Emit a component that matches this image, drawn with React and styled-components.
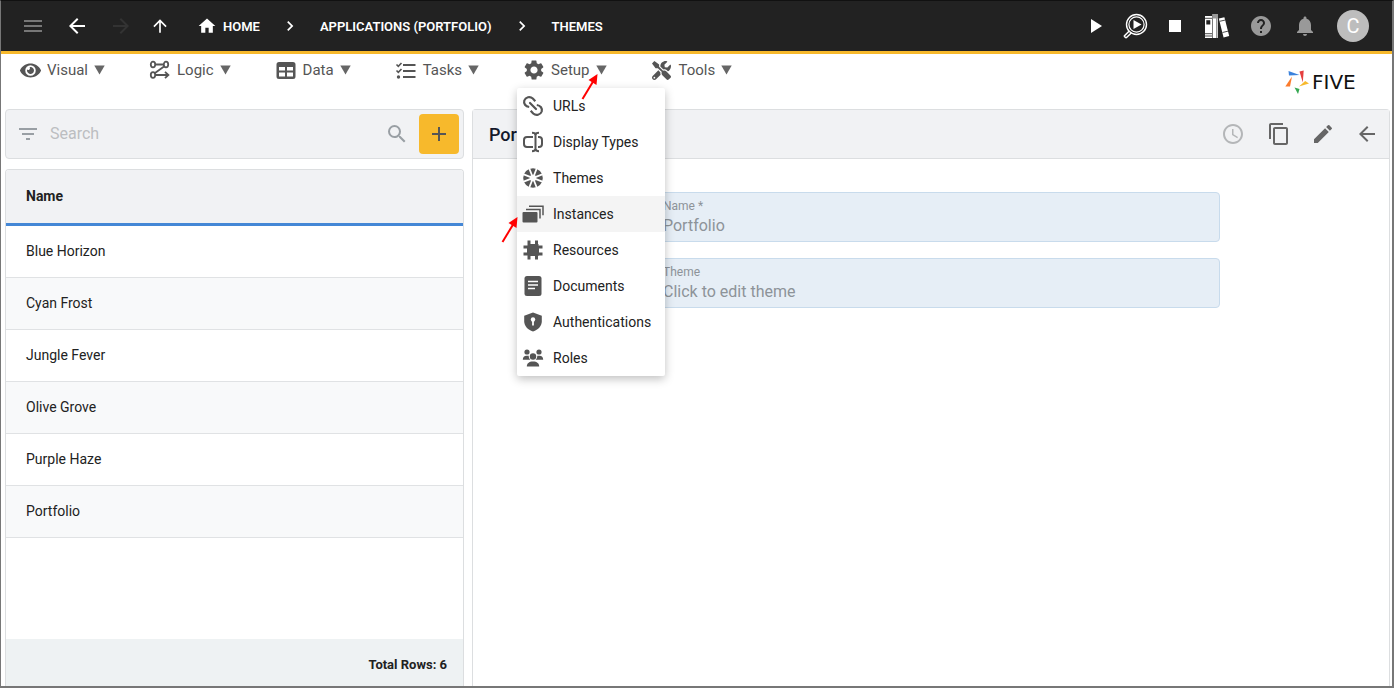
import React from 'react'
import styled, { createGlobalStyle } from 'styled-components'
import {
  MdMenu,
  MdArrowBack,
  MdArrowForward,
  MdArrowUpward,
  MdHome,
  MdChevronRight,
  MdPlayArrow,
  MdStop,
  MdHelp,
  MdNotifications,
  MdFilterList,
  MdSearch,
  MdAdd,
  MdAccessTime,
  MdContentCopy,
  MdEdit,
  MdSettings
} from 'react-icons/md'
import { FaEye, FaTools } from 'react-icons/fa'

const themes = ['Blue Horizon', 'Cyan Frost', 'Jungle Fever', 'Olive Grove', 'Purple Haze', 'Portfolio']

/* ---------- icons ---------- */

const LogicIcon = () => (
  <svg width="22" height="22" viewBox="0 0 22 22" fill="none" stroke="currentColor" strokeWidth="1.800">
    <ellipse cx="4" cy="5.5" rx="2.2" ry="2.800" />
    <ellipse cx="17" cy="5.5" rx="2.2" ry="2.800" />
    <ellipse cx="4" cy="16" rx="2.2" ry="2.800" />
    <path d="M6.5 5.5h8M15 7.5L6 14M6.5 16H19M16 12.8l3.4 3.2-3.4 3.2" />
  </svg>
)

const DataIcon = () => (
  <svg width="22" height="22" viewBox="0 0 22 22" fill="currentColor" fillRule="evenodd">
    <path d="M4 3h14a2.500 2.500 0 0 1 2.500 2.500v12a2.500 2.500 0 0 1-2.500 2.500H4A2.500 2.500 0 0 1 1.500 17.500v-12A2.500 2.500 0 0 1 4 3zM4 8v3.500h6V8zM12 8v3.500h6V8zM4 13.500v4h6v-4zM12 13.500v4h6v-4z" />
  </svg>
)

const TasksIcon = () => (
  <svg width="22" height="22" viewBox="0 0 22 22" fill="none" stroke="currentColor" strokeWidth="2">
    <path d="M8 6h12.500M8 12h12.500M8 18h12.500" />
    <path d="M1.500 5.500l1.800 1.800L6.500 4M1.500 11.500l1.800 1.800L6.500 10" strokeWidth="1.600" />
    <circle cx="3.500" cy="18" r="1.700" fill="currentColor" stroke="none" />
  </svg>
)

const UrlIcon = () => (
  <svg width="22" height="22" viewBox="0 0 22 22" fill="none" stroke="currentColor" strokeWidth="2.200">
    <path d="M7.200 12C3.500 11.500 1.400 8.600 2.300 5.500 3.500 2 8 1 10.800 3.500l2.500 2.700" />
    <path d="M14.800 10c3.700.5 5.800 3.400 4.900 6.500-1.200 3.500-5.700 4.500-8.500 2l-2.500-2.700" />
    <path d="M8 8l6 6" strokeLinecap="round" />
  </svg>
)

const DisplayIcon = () => (
  <svg width="22" height="22" viewBox="0 0 22 22" fill="none" stroke="currentColor" strokeWidth="2">
    <path d="M11 6H5a3 3 0 0 0-3 3v4a3 3 0 0 0 3 3h6" />
    <path d="M16 6h1a3 3 0 0 1 3 3v4a3 3 0 0 1-3 3h-1" />
    <path d="M13.500 4v14M10 1.800c2 0 3.500.6 3.500 2.400 0-1.800 1.500-2.400 3.500-2.400M10 20.200c2 0 3.500-.6 3.500-2.400 0 1.800 1.500 2.400 3.500 2.400" />
  </svg>
)

const ThemesIcon = () => (
  <svg width="22" height="22" viewBox="0 0 22 22">
    <circle cx="11" cy="11" r="9.800" fill="currentColor" />
    <g stroke="#fff" strokeWidth="1.800">
      <path d="M7.100 1L14.900 21M14.900 1L7.100 21M1 7.100L21 14.900M1 14.900L21 7.100" />
    </g>
    <circle cx="11" cy="11" r="3.200" fill="#fff" />
  </svg>
)

const InstancesIcon = () => (
  <svg width="22" height="22" viewBox="0 0 22 22" fill="none" stroke="currentColor">
    <rect x="0.500" y="9" width="15" height="10.500" rx="1" fill="currentColor" stroke="none" />
    <path d="M4 6.500h14v9" strokeWidth="1.500" />
    <path d="M7 3.200h14v9" strokeWidth="1.500" />
  </svg>
)

const ResourcesIcon = () => (
  <svg width="22" height="22" viewBox="0 0 22 22" fill="currentColor">
    <path d="M5.500 1.500h3V5H13V1.500h3V5h.5v1.500h4v3H17v4h3.500v3h-4V17H16v3.500h-3V17H8.500v3.500h-3V16.500h-4v-3H5v-4H1.500v-3h4z" />
  </svg>
)

const DocumentsIcon = () => (
  <svg width="22" height="22" viewBox="0 0 22 22">
    <rect x="2.500" y="1" width="17" height="20" rx="2.500" fill="currentColor" />
    <path d="M6 6.500h10M6 10h10M6 13.500h7" stroke="#fff" strokeWidth="1.400" />
  </svg>
)

const AuthIcon = () => (
  <svg width="22" height="22" viewBox="0 0 22 22">
    <path d="M11 1.500l8.800 3.300v5.500c0 4.700-3.400 8.500-8.800 10.200-5.400-1.700-8.800-5.500-8.800-10.200V4.800z" fill="currentColor" />
    <circle cx="11" cy="8.500" r="2.200" fill="#fff" />
    <path d="M11 9v5.500" stroke="#fff" strokeWidth="1.800" />
  </svg>
)

const RolesIcon = () => (
  <svg width="22" height="22" viewBox="0 0 22 22" fill="currentColor">
    <circle cx="5" cy="5" r="2.600" />
    <circle cx="17" cy="5" r="2.600" />
    <circle cx="11" cy="9.500" r="3.200" />
    <path d="M.8 12.800c0-2.600 1.500-4 3.700-4h2.200c0 1.600.5 3 1.700 4zM21.200 12.800c0-2.600-1.500-4-3.700-4h-2.200c0 1.600-.5 3-1.700 4z" />
    <path d="M4.800 19.500c0-3 2.200-5 6.200-5s6.200 2 6.200 5z" />
  </svg>
)

const InspectIcon = () => (
  <svg width="26" height="26" viewBox="0 0 26 26" fill="none" stroke="currentColor">
    <circle cx="14.500" cy="11.500" r="10" strokeWidth="1.400" />
    <circle cx="14.500" cy="11.500" r="7.600" strokeWidth="1.200" />
    <path d="M11.500 7v9l8-4.500z" fill="currentColor" stroke="none" />
    <path d="M7.300 18L2 23.300M9.500 19.700L4 25M2 23l2 2" strokeWidth="1.500" />
  </svg>
)

const BooksIcon = () => (
  <svg width="26" height="26" viewBox="0 0 26 26" fill="currentColor">
    <path d="M1 3h7v22H1z" />
    <path d="M8.600 1h5.400v24H8.600z" />
    <path d="M14.800 5.500l5.600-1.300L25.200 23l-5.600 1.500z" />
    <path d="M2.300 7.200h4v4.300h-4z" fill="#222" />
    <path d="M1 5.300h7M1 20.700h7M1 23h7M15.700 8.300l5.600-1.300M18.500 19.500l5.700-1.400" stroke="#222" strokeWidth="0.800" />
    <path d="M8.600 1h5.400v4.500H8.600zM12 5.500h1.500V25H12z" fill="#999" />
  </svg>
)

const Triangle = () => (
  <svg width="11" height="10" viewBox="0 0 11 10">
    <path d="M.3 0.500h10.400L5.500 9.500z" fill="#666" />
  </svg>
)

const FiveMark = () => (
  <svg width="24" height="24" viewBox="0 0 24 24">
    <path d="M3.500 1l11 4-10.500.5z" fill="#3b82dc" />
    <path d="M14.500 1.500L18.700.5l-.9 12z" fill="#e53f3f" />
    <path d="M14 16.500L20.200 11l3.800 2.500z" fill="#f7b92c" />
    <path d="M9.500 17.500l5 1.500-1.500 5z" fill="#36a852" />
    <path d="M.3 16.500L7 6.500l-2 10z" fill="#fb7b2c" />
  </svg>
)

const RedArrow = () => (
  <svg width="20" height="30" viewBox="0 0 20 30">
    <path d="M1.500 28L13 9" stroke="#f00" strokeWidth="2" />
    <path d="M16.500 3l-1 11-8-5z" fill="#f00" />
  </svg>
)

const menus = [
  { label: 'Visual', icon: <FaEye size={21} /> },
  { label: 'Logic', icon: <LogicIcon /> },
  { label: 'Data', icon: <DataIcon /> },
  { label: 'Tasks', icon: <TasksIcon /> },
  { label: 'Setup', icon: <MdSettings size={24} />, open: true },
  { label: 'Tools', icon: <FaTools size={19} /> }
]

const setupItems = [
  { label: 'URLs', icon: <UrlIcon /> },
  { label: 'Display Types', icon: <DisplayIcon /> },
  { label: 'Themes', icon: <ThemesIcon /> },
  { label: 'Instances', icon: <InstancesIcon />, active: true },
  { label: 'Resources', icon: <ResourcesIcon /> },
  { label: 'Documents', icon: <DocumentsIcon /> },
  { label: 'Authentications', icon: <AuthIcon /> },
  { label: 'Roles', icon: <RolesIcon /> }
]

/* ---------- sections ---------- */

const TopBar = () => (
  <Header>
    <IconButton aria-label="Menu" $color="#777"><MdMenu /></IconButton>
    <IconButton aria-label="Back"><MdArrowBack /></IconButton>
    <IconButton aria-label="Forward" $color="#333"><MdArrowForward /></IconButton>
    <IconButton aria-label="Up" $width={34}><MdArrowUpward size={20} /></IconButton>
    <Breadcrumbs aria-label="Breadcrumb">
      <Crumb href="#home"><MdHome size={20} />HOME</Crumb>
      <MdChevronRight size={20} />
      <Crumb href="#applications">APPLICATIONS (PORTFOLIO)</Crumb>
      <MdChevronRight size={20} />
      <Crumb href="#themes">THEMES</Crumb>
    </Breadcrumbs>
    <IconButton aria-label="Run" $width={40}><MdPlayArrow /></IconButton>
    <IconButton aria-label="Inspect" $width={40}><InspectIcon /></IconButton>
    <IconButton aria-label="Stop" $width={40}><MdStop /></IconButton>
    <IconButton aria-label="Library"><BooksIcon /></IconButton>
    <IconButton aria-label="Help" $color="#999"><MdHelp /></IconButton>
    <IconButton aria-label="Notifications" $color="#999"><MdNotifications /></IconButton>
    <Avatar>C</Avatar>
  </Header>
)

const MenuBar = () => (
  <Bar>
    <BarMenus>
      {menus.map(menu => (
        <BarItem key={menu.label}>
          <BarButton aria-expanded={!!menu.open}>
            <IconSlot>{menu.icon}</IconSlot>
            {menu.label}
            <Triangle />
          </BarButton>
          {menu.open && <SetupMenu />}
        </BarItem>
      ))}
    </BarMenus>
    <Logo><FiveMark />FIVE</Logo>
  </Bar>
)

const SetupMenu = () => (
  <Dropdown>
    {setupItems.map(item => (
      <DropdownItem key={item.label} $active={item.active}>
        <IconSlot>{item.icon}</IconSlot>
        {item.label}
      </DropdownItem>
    ))}
    <Pointer $left={64} $top={-17}><RedArrow /></Pointer>
    <Pointer $left={-16} $top={126}><RedArrow /></Pointer>
  </Dropdown>
)

const ThemeList = () => (
  <ListColumn>
    <SearchBar>
      <MdFilterList size={24} />
      <SearchInput type="text" placeholder="Search" aria-label="Search" />
      <MdSearch size={24} />
      <AddButton aria-label="Add"><MdAdd size={24} /></AddButton>
    </SearchBar>
    <TablePanel>
      <Table>
        <thead>
          <tr><HeadCell>Name</HeadCell></tr>
        </thead>
        <tbody>
          {themes.map(theme => (
            <Row key={theme}><Cell>{theme}</Cell></Row>
          ))}
        </tbody>
      </Table>
      <TableFooter>Total Rows: 6</TableFooter>
    </TablePanel>
  </ListColumn>
)

const ThemeForm = () => (
  <FormPanel>
    <FormHeader>
      <FormTitle>Portfolio</FormTitle>
      <IconButton aria-label="History" $color="#b4b6b8" $width={48}><MdAccessTime /></IconButton>
      <IconButton aria-label="Copy" $color="#666"><MdContentCopy /></IconButton>
      <IconButton aria-label="Edit" $color="#666"><MdEdit /></IconButton>
      <IconButton aria-label="Close" $color="#666"><MdArrowBack /></IconButton>
    </FormHeader>
    <Fields>
      <Field>
        <FieldLabel htmlFor="name">Name *</FieldLabel>
        <FieldInput id="name" defaultValue="Portfolio" readOnly />
      </Field>
      <Field>
        <FieldLabel htmlFor="theme">Theme</FieldLabel>
        <FieldInput id="theme" defaultValue="Click to edit theme" readOnly />
      </Field>
    </Fields>
  </FormPanel>
)

const App = () => (
  <Page>
    <GlobalStyle />
    <TopBar />
    <MenuBar />
    <Content>
      <ThemeList />
      <ThemeForm />
    </Content>
  </Page>
)

/* ---------- styles ---------- */

const GlobalStyle = createGlobalStyle`
  * {
    box-sizing: border-box;
  }
  body {
    margin: 0;
    font-family: Roboto, 'Liberation Sans', sans-serif;
    color: #222;
    background: #fff;
  }
  button, input {
    font-family: inherit;
  }
  svg {
    flex: none;
  }
`

const Page = styled.div`
  display: flex;
  flex-direction: column;
  height: 100vh;
  border: solid #777;
  border-width: 1px 2px 2px 1px;
  border-top-color: #111;
  overflow: hidden;
`

const Header = styled.header`
  display: flex;
  align-items: center;
  flex: none;
  height: 53px;
  padding: 0 23px 0 10px;
  background: #222;
  border-bottom: 3px solid #f7b92c;
`

const IconButton = styled.button`
  display: flex;
  align-items: center;
  justify-content: center;
  width: ${props => props.$width || 44}px;
  height: 44px;
  padding: 0;
  border: 0;
  background: none;
  color: ${props => props.$color || '#fff'};
  font-size: 24px;
`

const Breadcrumbs = styled.nav`
  display: flex;
  align-items: center;
  flex: 1;
  gap: 20px;
  padding-left: 20px;
  color: #fff;
`

const Crumb = styled.a`
  display: flex;
  align-items: center;
  gap: 6px;
  color: #fff;
  font-size: 13px;
  font-weight: 600;
  text-decoration: none;
`

const Avatar = styled.div`
  display: flex;
  align-items: center;
  justify-content: center;
  width: 32px;
  height: 32px;
  margin-left: 10px;
  border-radius: 50%;
  background: #bdbdbd;
  color: #fff;
  font-size: 20px;
`

const Bar = styled.div`
  display: flex;
  justify-content: space-between;
  flex: none;
  height: 55px;
  padding: 0 19px 0 18px;
`

const BarMenus = styled.nav`
  display: flex;
  gap: 44px;
`

const BarItem = styled.div`
  position: relative;
`

const BarButton = styled.button`
  display: flex;
  align-items: center;
  gap: 6px;
  height: 32px;
  padding: 0;
  border: 0;
  background: none;
  color: #555;
  font-size: 15px;
`

const IconSlot = styled.span`
  display: flex;
  align-items: center;
  justify-content: center;
  width: 22px;
  height: 22px;
  color: #555;
`

const Logo = styled.div`
  display: flex;
  align-items: center;
  gap: 3px;
  width: 88px;
  color: #111;
  font-family: 'DejaVu Sans', sans-serif;
  font-size: 20px;
`

const Dropdown = styled.div`
  position: absolute;
  top: 34px;
  left: -6px;
  z-index: 1;
  width: 148px;
  border-radius: 2px;
  background: #fff;
  box-shadow: 0 3px 10px rgba(0, 0, 0, 0.25);
`

const DropdownItem = styled.button`
  display: flex;
  align-items: center;
  gap: 9px;
  width: 100%;
  height: 36px;
  padding: 0 5px;
  border: 0;
  background: ${props => (props.$active ? '#f4f4f4' : 'none')};
  color: #222;
  font-size: 14px;
  white-space: nowrap;
`

const Pointer = styled.span`
  position: absolute;
  top: ${props => props.$top}px;
  left: ${props => props.$left}px;
  pointer-events: none;
`

const Content = styled.main`
  display: grid;
  grid-template-columns: 1fr 2fr;
  gap: 8px;
  flex: 1;
  min-height: 0;
  padding: 0 2px 0 4px;
`

const ListColumn = styled.section`
  display: flex;
  flex-direction: column;
  gap: 10px;
  min-height: 0;
`

const SearchBar = styled.div`
  display: flex;
  align-items: center;
  flex: none;
  gap: 10px;
  height: 50px;
  padding: 0 4px 0 10px;
  border: 1px solid #dcdee0;
  border-radius: 4px;
  background: #f1f2f4;
  color: #999fa4;
`

const SearchInput = styled.input`
  flex: 1;
  min-width: 0;
  padding: 0 0 2px;
  border: 0;
  outline: 0;
  background: none;
  color: #222;
  font-size: 16px;

  &::placeholder {
    color: #bcbec1;
  }
`

const AddButton = styled.button`
  display: flex;
  align-items: center;
  justify-content: center;
  width: 40px;
  height: 40px;
  padding: 0;
  border: 0;
  border-radius: 4px;
  background: #f7b92c;
  color: #555;
`

const TablePanel = styled.div`
  display: flex;
  flex-direction: column;
  justify-content: space-between;
  flex: 1;
  border: 1px solid #dcdee0;
  border-bottom: 0;
  border-radius: 4px 4px 0 0;
  overflow: hidden;
`

const Table = styled.table`
  width: 100%;
  border-collapse: separate;
  border-spacing: 0;
  font-size: 14px;
`

const HeadCell = styled.th`
  height: 56px;
  padding: 0 20px 2px;
  border-bottom: 3px solid #4487d6;
  background: #f1f2f4;
  font-weight: 700;
  text-align: left;
`

const Row = styled.tr`
  &:nth-child(even) {
    background: #f8f9fa;
  }
`

const Cell = styled.td`
  height: 52px;
  padding: 0 20px 2px;
  border-bottom: 1px solid #e0e2e4;
`

const TableFooter = styled.div`
  height: 47px;
  padding: 16px;
  background: #eef2f3;
  font-size: 13px;
  font-weight: 700;
  line-height: 20px;
  text-align: right;
`

const FormPanel = styled.section`
  border: 1px solid #dcdee0;
  border-bottom: 0;
  border-radius: 4px 4px 0 0;
`

const FormHeader = styled.div`
  display: flex;
  align-items: center;
  height: 49px;
  padding-left: 16px;
  border-bottom: 1px solid #dcdee0;
  background: #f1f2f4;
`

const FormTitle = styled.h1`
  flex: 1;
  margin: 0;
  color: #14192b;
  font-size: 18px;
  font-weight: 500;
`

const Fields = styled.form`
  display: flex;
  flex-direction: column;
  gap: 16px;
  max-width: 578px;
  margin: 33px auto 0;
`

const Field = styled.div`
  display: flex;
  flex-direction: column;
  height: 50px;
  padding: 5px 20px;
  border: 1px solid #c8dbec;
  border-radius: 4px;
  background: #e6eef6;
  color: #8d9399;
`

const FieldLabel = styled.label`
  font-size: 12px;
  line-height: 16px;
`

const FieldInput = styled.input`
  height: 22px;
  padding: 0;
  border: 0;
  outline: 0;
  background: none;
  color: inherit;
  font-size: 16px;
`

export default App
